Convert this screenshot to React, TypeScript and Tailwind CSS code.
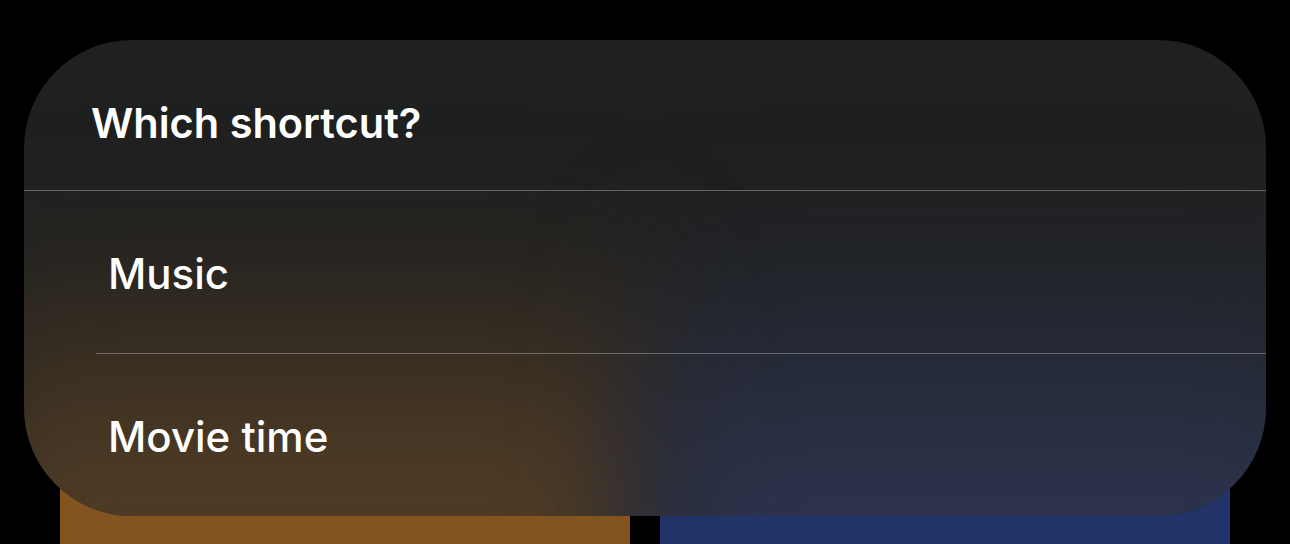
import React from "react";

export default function App() {
  return (
    <div className="relative h-[544px] w-[1290px] overflow-hidden bg-black" style={{ fontFamily: "Inter, 'Noto Sans', sans-serif" }}>
      {/* Cards behind the sheet */}
      <div className="grid grid-cols-2 gap-[30px] px-[60px] pt-[300px]">
        <div className="h-[300px] rounded-[28px] bg-[#845420]" />
        <div className="h-[300px] rounded-[28px] bg-[#22336a]" />
      </div>

      {/* Sheet overlay */}
      <div className="absolute left-[24px] top-[40px] h-[476px] w-[1242px] overflow-hidden rounded-[108px] bg-[#1f2020]">
        <div className="pointer-events-none absolute left-[-60px] top-[170px] h-[460px] w-[681px] bg-gradient-to-b from-transparent via-[#503c25] via-60% to-[#503c25] blur-[60px]" />
        <div className="pointer-events-none absolute left-[621px] top-[170px] h-[460px] w-[700px] bg-gradient-to-b from-transparent via-[#2c334c] via-60% to-[#2c334c] blur-[60px]" />

        <div className="relative flex flex-col text-white">
          <div className="h-[150px] pl-[67px] pt-[63px]">
            <div className="text-[41.5px] font-semibold leading-[41.5px]">Which shortcut?</div>
          </div>
          <div className="h-px bg-white/30" />
          <div className="h-[162px] pl-[84px] pt-[62px]">
            <div className="text-[42px] font-medium leading-[42px]">Music</div>
          </div>
          <div className="ml-[72px] h-px bg-white/30" />
          <div className="h-[162px] pl-[84px] pt-[62px]">
            <div className="text-[42px] font-medium leading-[42px]">Movie time</div>
          </div>
        </div>
      </div>
    </div>
  );
}
